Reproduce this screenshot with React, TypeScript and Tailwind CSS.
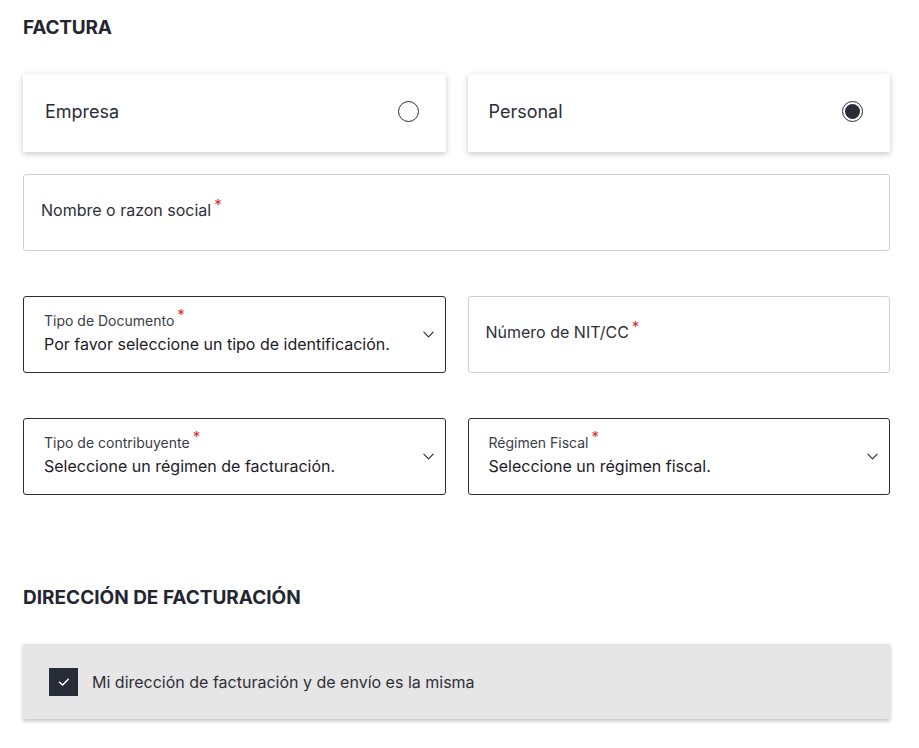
import React from "react";

const Star = () => <span className="text-[#d32f2f] text-[15px] relative -top-[6px] ml-[3px]">*</span>;

const Chevron = () => (
  <svg width="13" height="13" viewBox="0 0 14 14" fill="none" className="shrink-0">
    <path d="M2 4.5 L7 9.5 L12 4.5" stroke="#2a2d36" strokeWidth="1.2" strokeLinecap="round" strokeLinejoin="round" />
  </svg>
);

function Select({ label, value }: { label: string; value: string }) {
  return (
    <div className="min-w-0 h-[77px] border border-[#2b2e36] rounded-[3px] flex items-center pl-[20px] pr-[10px]">
      <div className="flex-1 flex flex-col pb-[3px]">
        <div className="text-[14px] leading-[18px] text-[#3a3d45]">{label}<Star /></div>
        <div className="text-[16px] leading-[22px] text-[#1e2027] mt-[3px]">{value}</div>
      </div>
      <Chevron />
    </div>
  );
}

function Input({ label, className = "" }: { label: string; className?: string }) {
  return (
    <div className={"h-[77px] border border-[#cfcfcf] rounded-[3px] flex items-center pl-[17px] pb-[4px] " + className}>
      <span className="text-[16px] text-[#2e3038]">{label}<Star /></span>
    </div>
  );
}

export default function App() {
  return (
    <div className="w-[919px] h-[748px] bg-white px-[23px] pt-[15px] text-[#23262f] overflow-hidden" style={{ fontFamily: "Inter, 'Open Sans', sans-serif" }}>
      <h2 className="text-[19px] font-bold tracking-[-0.2px] leading-[26px] text-[#23262f]">FACTURA</h2>
      <div className="grid grid-cols-2 gap-[22px] mt-[33px] w-[867px]">
        <div className="h-[78px] bg-white shadow-[0_2px_6px_rgba(0,0,0,0.22)] flex items-center justify-between pl-[22px] pr-[27px] pb-[3px]">
          <span className="text-[18px] text-[#2b2d36]">Empresa</span>
          <span className="w-[21px] h-[21px] rounded-full border border-[#2b2d36]" />
        </div>
        <div className="h-[78px] bg-white shadow-[0_2px_6px_rgba(0,0,0,0.22)] flex items-center justify-between pl-[21px] pr-[27px] pb-[3px]">
          <span className="text-[18px] text-[#2b2d36]">Personal</span>
          <span className="w-[21px] h-[21px] rounded-full border border-[#2b2d36] flex items-center justify-center">
            <span className="w-[15px] h-[15px] rounded-full bg-[#2b2d36]" />
          </span>
        </div>
      </div>
      <Input label="Nombre o razon social" className="mt-[22px] w-[867px]" />
      <div className="grid grid-cols-2 gap-[22px] mt-[45px] w-[867px]">
        <Select label="Tipo de Documento" value="Por favor seleccione un tipo de identificación." />
        <Input label="Número de NIT/CC" className="min-w-0" />
      </div>
      <div className="grid grid-cols-2 gap-[22px] mt-[45px] w-[867px]">
        <Select label="Tipo de contribuyente" value="Seleccione un régimen de facturación." />
        <Select label="Régimen Fiscal" value="Seleccione un régimen fiscal." />
      </div>
      <h2 className="text-[19px] font-bold tracking-[0px] leading-[26px] mt-[90px] text-[#23262f]">DIRECCIÓN DE FACTURACIÓN</h2>
      <div className="mt-[33px] w-[867px] h-[75px] bg-[#e6e6e6] shadow-[0_2px_4px_rgba(0,0,0,0.25)] flex items-center pl-[26px]">
        <span className="w-[29px] h-[28px] bg-[#282c36] flex items-center justify-center">
          <svg width="16" height="16" viewBox="0 0 16 16" fill="none">
            <path d="M3.5 8.2 L6.6 11 L12.3 5.2" stroke="white" strokeWidth="1.5" strokeLinecap="round" strokeLinejoin="round" />
          </svg>
        </span>
        <span className="ml-[14px] text-[16px] text-[#2e3038]">Mi dirección de facturación y de envío es la misma</span>
      </div>
    </div>
  );
}
